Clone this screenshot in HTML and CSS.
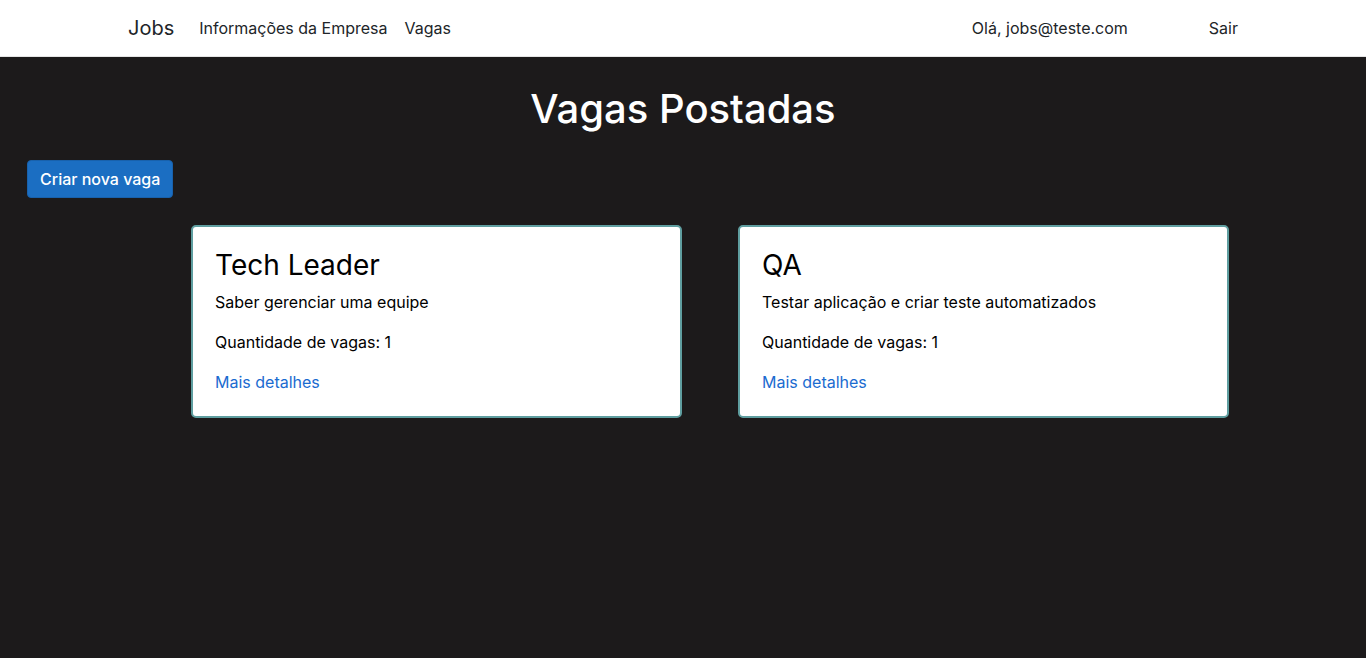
FILE: index.html
```html
<!DOCTYPE html>
<html lang="pt-BR">
<head>
<meta charset="utf-8">
<title>Vagas Postadas - Jobs</title>
<link rel="stylesheet" href="styles.css">
</head>
<body>
<header class="navbar">
  <div class="nav-container">
    <a class="brand" href="#">Jobs</a>
    <nav class="nav-left">
      <a class="nav-link" href="#">Informações da Empresa</a>
      <a class="nav-link" href="#">Vagas</a>
    </nav>
    <div class="nav-right">
      <span class="nav-link">Olá, jobs@teste.com</span>
      <a class="nav-link" href="#">Sair</a>
    </div>
  </div>
</header>
<main class="main">
  <h1 class="page-title">Vagas Postadas</h1>
  <div class="actions">
    <a class="btn-primary" href="#">Criar nova vaga</a>
  </div>
  <div class="cards">
    <div class="card">
      <h3 class="card-title">Tech Leader</h3>
      <p class="card-text">Saber gerenciar uma equipe</p>
      <p class="card-text">Quantidade de vagas: 1</p>
      <a class="card-link" href="#">Mais detalhes</a>
    </div>
    <div class="card">
      <h3 class="card-title">QA</h3>
      <p class="card-text">Testar aplicação e criar teste automatizados</p>
      <p class="card-text">Quantidade de vagas: 1</p>
      <a class="card-link" href="#">Mais detalhes</a>
    </div>
  </div>
</main>
<footer class="footer">
  <span class="footer-bar wide"></span>
  <span class="footer-bar narrow"></span>
</footer>
</body>
</html>
```
FILE: styles.css
```css
* { box-sizing: border-box; }
html, body {
  margin: 0;
  padding: 0;
}
body {
  background: #1c1a1b;
  font-family: Inter, "Noto Sans", sans-serif;
  font-size: 16px;
  line-height: 1.5;
  color: #000;
  overflow: hidden;
}
a { text-decoration: none; }

.navbar {
  background: #fff;
  height: 57px;
  border-bottom: 1px solid #e5e5e5;
}
.nav-container {
  width: 1140px;
  margin: 0 auto;
  padding: 0 12px;
  height: 56px;
  display: flex;
  align-items: center;
}
.brand {
  font-size: 20px;
  color: #212529;
  margin-left: 3px;
  margin-right: 25px;
  line-height: 30px;
}
.nav-left {
  display: flex;
  gap: 17px;
  flex: 1;
}
.nav-link {
  color: #212529;
  font-size: 16px;
  line-height: 24px;
}
.nav-right {
  display: flex;
  gap: 81px;
  margin-right: 3px;
}
.nav-right .nav-link:first-child {
  margin-left: -1px;
}

.main {
  height: 600px;
}
.page-title {
  margin: 28px 0 0;
  text-align: center;
  color: #fff;
  font-size: 40px;
  font-weight: 500;
  line-height: 48px;
}
.actions {
  margin-top: 27px;
  padding-left: 27px;
}
.btn-primary {
  display: inline-block;
  background: #1b6ec2;
  border: 1px solid #1861ac;
  color: #fff;
  font-weight: 500;
  font-size: 16px;
  line-height: 24px;
  padding: 6px 12px;
  border-radius: 4px;
}
.cards {
  display: flex;
  gap: 55px;
  margin-top: 27px;
  padding-left: 191px;
}
.card {
  width: 491px;
  background: #fff;
  border: 2px solid #5f9ea0;
  border-radius: 5px;
  padding: 21px 22px 22px;
}
.card + .card {
  margin-left: 1px;
}
.card-title {
  margin: 0 0 8px;
  font-size: 28px;
  font-weight: 400;
  line-height: 34px;
}
.card-text {
  margin: 0 0 16px;
}
.card-link {
  color: #1a6bd0;
  display: block;
}

.footer {
  display: flex;
  padding-left: 48px;
  height: 1px;
}
.footer-bar {
  display: block;
  height: 1px;
  background: #5a5a5a;
}
.footer-bar.wide { width: 344px; }
.footer-bar.narrow { width: 48px; margin-left: 99px; }
```
